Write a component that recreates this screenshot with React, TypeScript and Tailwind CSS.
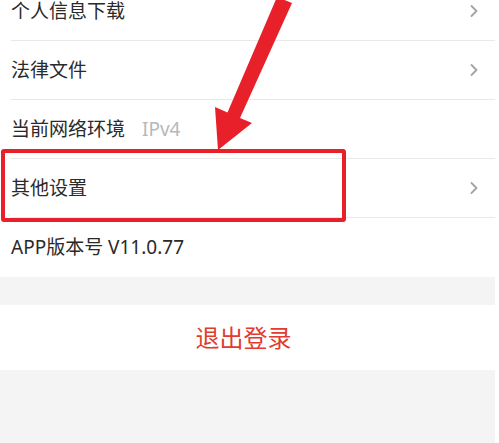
import React from 'react'

const font = { fontFamily: '"Noto Sans", "Noto Sans CJK SC", sans-serif' }

function Chevron() {
  return (
    <svg width="10" height="14" viewBox="0 0 10 14" className="mr-[16px]">
      <path d="M2.5 2 L7.5 7 L2.5 12" fill="none" stroke="#a3a3a3" strokeWidth="1.8" strokeLinecap="round" strokeLinejoin="round" />
    </svg>
  )
}

function Row({ label, extra, arrow, last }: { label: string; extra?: string; arrow?: boolean; last?: boolean }) {
  return (
    <div className="pl-[11px] bg-white">
      <div className={`h-[59px] flex items-center justify-between ${last ? '' : 'border-b border-[#e9e9e9]'}`}>
        <div className="flex items-center">
          <span className="text-[19px] text-[#2a2a2a] leading-none">{label}</span>
          {extra && <span className="ml-[17px] text-[19px] text-[#b8b8b8] leading-none">{extra}</span>}
        </div>
        {arrow && <Chevron />}
      </div>
    </div>
  )
}

export default function App() {
  return (
    <div className="w-[499px] h-[443px] overflow-hidden bg-white relative" style={font}>
      <div className="w-[495px] h-full bg-[#f4f4f4] flex flex-col">
        <div className="-mt-[18px]">
          <Row label="个人信息下载" arrow />
          <Row label="法律文件" arrow />
          <Row label="当前网络环境" extra="IPv4" />
          <Row label="其他设置" arrow />
          <Row label="APP版本号 V11.0.77" last />
        </div>
        <div className="mt-[28px] h-[65px] bg-white flex items-center justify-center">
          <span className="text-[24px] text-[#e23b2f] leading-none -ml-[8px]">退出登录</span>
        </div>
      </div>

      {/* annotation box */}
      <div className="absolute left-[1px] top-[149px] w-[345px] h-[73px] border-[4px] border-[#e8202a] rounded-[3px]" />

      {/* annotation arrow */}
      <svg className="absolute left-0 top-0" width="499" height="443" viewBox="0 0 499 443">
        <polygon
          points="277,-3 292,3 240,118 252,123 218,150 215,107 227.5,112.5"
          fill="#e8202a"
          strokeLinejoin="round"
        />
      </svg>
    </div>
  )
}
